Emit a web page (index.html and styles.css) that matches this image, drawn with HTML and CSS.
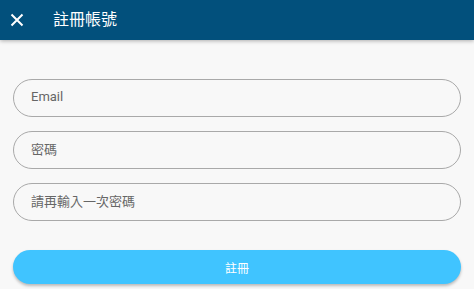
FILE: index.html
```html
<!DOCTYPE html>
<html lang="zh-Hant">
<head>
<meta charset="utf-8">
<link rel="stylesheet" href="styles.css">
</head>
<body>
<header class="appbar">
  <span class="close" aria-label="close">
    <svg width="14" height="14" viewBox="0 0 14 14"><path d="M1.5 1.5L12.5 12.5M12.5 1.5L1.5 12.5" stroke="#fff" stroke-width="2" fill="none"/></svg>
  </span>
  <h1 class="title">註冊帳號</h1>
</header>
<main class="form">
  <div class="field">Email</div>
  <div class="field">密碼</div>
  <div class="field">請再輸入一次密碼</div>
  <button class="submit">註冊</button>
</main>
</body>
</html>
```
FILE: styles.css
```css
html, body {
  margin: 0;
  padding: 0;
  background: #f8f8f8;
  font-family: Roboto, "Noto Sans CJK TC", sans-serif;
  width: 474px;
  height: 289px;
  overflow: hidden;
}
.appbar {
  height: 40px;
  background: #02507c;
  display: flex;
  align-items: center;
  box-shadow: 0 1px 4px rgba(0,0,0,0.3);
  position: relative;
}
.close {
  display: flex;
  width: 14px;
  height: 14px;
  margin-left: 10px;
}
.title {
  margin: 0 0 0 29px;
  color: #fff;
  font-size: 16px;
  font-weight: 400;
  line-height: 1;
}
.form {
  display: flex;
  flex-direction: column;
  padding: 39px 13px 0 13px;
  gap: 14px;
}
.field {
  box-sizing: border-box;
  height: 38px;
  border: 1px solid #a9a9a9;
  border-radius: 19px;
  display: flex;
  align-items: center;
  padding: 0 0 3px 17px;
  font-size: 13px;
  color: #666;
}
.submit {
  margin-top: 15px;
  height: 34px;
  border: none;
  border-radius: 17px;
  background: #40c4ff;
  color: #fff;
  font-family: inherit;
  font-size: 12px;
  box-shadow: 0 2px 3px rgba(0,0,0,0.25);
}
```
